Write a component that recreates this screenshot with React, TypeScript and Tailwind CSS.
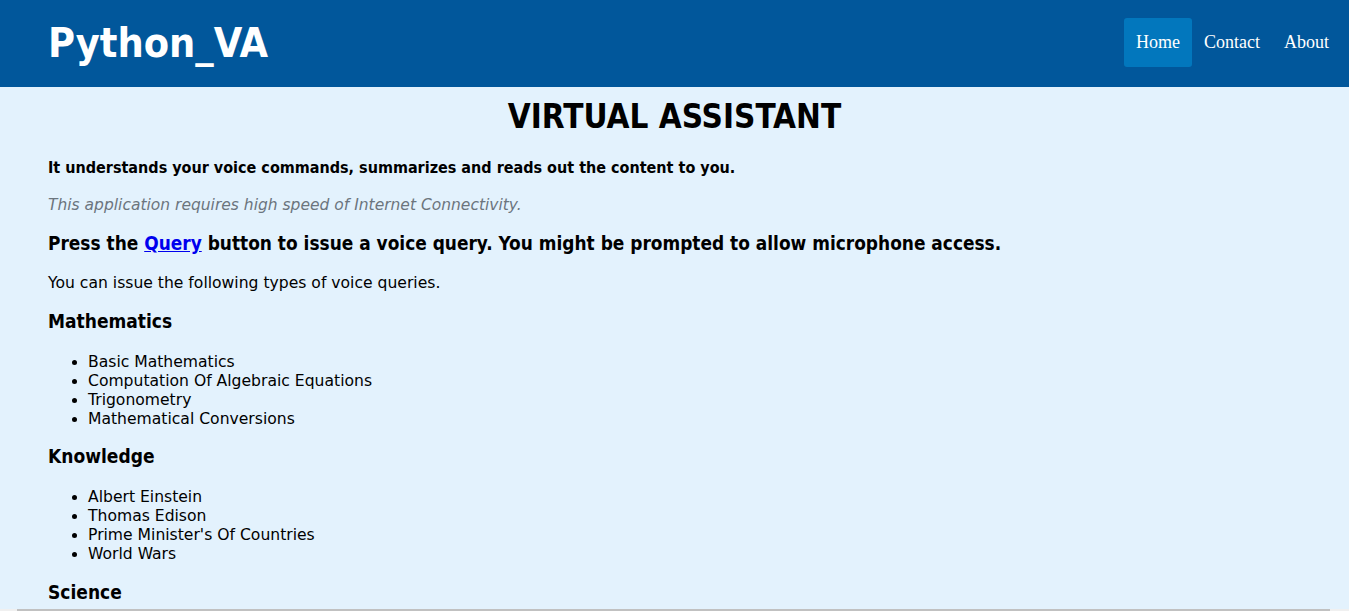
import React from "react";

export default function App() {
  return (
    <div className="h-[611px] flex flex-col overflow-hidden bg-[#e3f2fd] font-['DejaVu_Sans',sans-serif]">
      <header className="h-[87px] shrink-0 bg-[#01579b] flex items-center justify-between pl-[48px] pr-[20px]">
        <div className="text-white font-bold font-stretch-condensed text-[41px] leading-none">Python_VA</div>
        <nav className="flex items-center mb-[2px] font-['Liberation_Serif',serif] text-white text-[18px]">
          <a className="block bg-[#0277bd] rounded-[3px] px-[12px] py-[12px] leading-[25px]">Home</a>
          <a className="block px-[12px] py-[12px] leading-[25px]">Contact</a>
          <a className="block pl-[12px] py-[12px] leading-[25px]">About</a>
        </nav>
      </header>
      <main className="flex-1 overflow-hidden px-[48px] text-black">
        <h1 className="text-center font-bold font-stretch-condensed text-[33px] leading-[36px] pt-[12px]">VIRTUAL ASSISTANT</h1>
        <p className="font-bold font-stretch-condensed text-[16px] leading-[20px] mt-[23px]">It understands your voice commands, summarizes and reads out the content to you.</p>
        <p className="italic text-[15.5px] leading-[20px] mt-[17px] text-[#6c757d]">This application requires high speed of Internet Connectivity.</p>
        <h3 className="font-bold font-stretch-condensed text-[18.9px] leading-[24px] mt-[16px]">
          Press the <a className="text-[#0000ee] underline">Query</a> button to issue a voice query. You might be prompted to allow microphone access.
        </h3>
        <p className="text-[15.6px] leading-[20px] mt-[18px]">You can issue the following types of voice queries.</p>
        <h4 className="font-bold font-stretch-condensed text-[19px] leading-[24px] mt-[16px]">Mathematics</h4>
        <ul className="list-disc pl-[40px] mt-[20px] text-[15.6px] leading-[19px]">
          <li>Basic Mathematics</li>
          <li>Computation Of Algebraic Equations</li>
          <li>Trigonometry</li>
          <li>Mathematical Conversions</li>
        </ul>
        <h4 className="font-bold font-stretch-condensed text-[19px] leading-[24px] mt-[15px]">Knowledge</h4>
        <ul className="list-disc pl-[40px] mt-[20px] text-[15.6px] leading-[19px]">
          <li>Albert Einstein</li>
          <li>Thomas Edison</li>
          <li>Prime Minister's Of Countries</li>
          <li>World Wars</li>
        </ul>
        <h4 className="font-bold font-stretch-condensed text-[19px] leading-[24px] mt-[16px]">Science</h4>
      </main>
      <div className="h-[2px] shrink-0 flex bg-[#f0f0f0]">
        <div className="ml-[17px] w-[1313px] bg-[#c1c1c1]"></div>
      </div>
    </div>
  );
}
